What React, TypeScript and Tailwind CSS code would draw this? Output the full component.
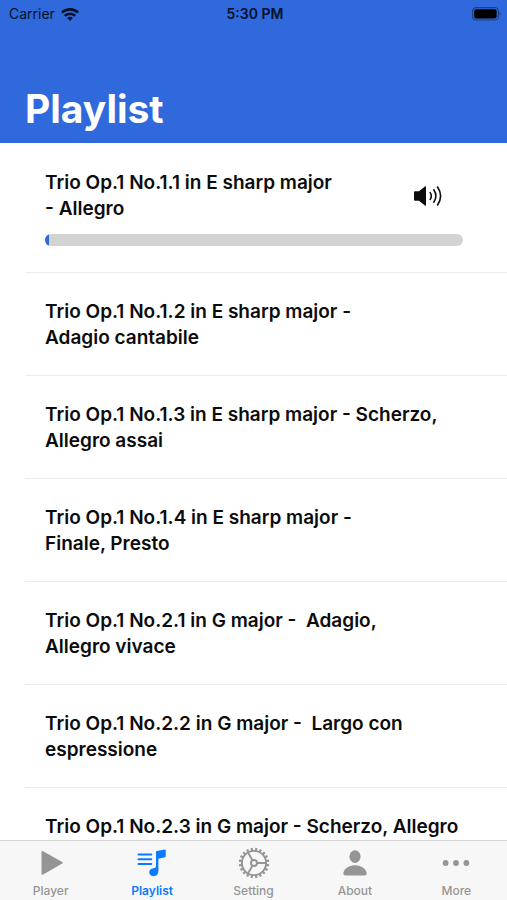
import type { ReactNode } from "react";

type Track = {
  id: string;
  lines: string[];
};

const tracks: Track[] = [
  { id: "1.1", lines: ["Trio Op.1 No.1.1 in E sharp major", "- Allegro"] },
  { id: "1.2", lines: ["Trio Op.1 No.1.2 in E sharp major -", "Adagio cantabile"] },
  { id: "1.3", lines: ["Trio Op.1 No.1.3 in E sharp major - Scherzo,", "Allegro assai"] },
  { id: "1.4", lines: ["Trio Op.1 No.1.4 in E sharp major -", "Finale, Presto"] },
  { id: "2.1", lines: ["Trio Op.1 No.2.1 in G major -  Adagio,", "Allegro vivace"] },
  { id: "2.2", lines: ["Trio Op.1 No.2.2 in G major -  Largo con", "espressione"] },
  { id: "2.3", lines: ["Trio Op.1 No.2.3 in G major - Scherzo, Allegro"] },
];

const playing = { id: "1.1", progress: 1 };

function WifiIcon() {
  return (
    <svg viewBox="0 0 18 13" className="h-[13px] w-[18px]" fill="none" stroke="currentColor" strokeWidth="2.6" aria-hidden="true">
      <path d="M.9 4.7a11.5 11.5 0 0 1 16.2 0" />
      <path d="M3.8 7.9a7.4 7.4 0 0 1 10.4 0" />
      <path d="M9 13 6.2 10.1a4 4 0 0 1 5.6 0Z" fill="currentColor" stroke="none" />
    </svg>
  );
}

function BatteryIcon() {
  return (
    <svg viewBox="0 0 30 14" className="h-[14px] w-[30px]" aria-hidden="true">
      <rect x="1.6" y=".6" width="25.8" height="12.4" rx="3.6" fill="none" stroke="currentColor" strokeOpacity=".4" strokeWidth="1.2" />
      <rect x="3.2" y="2.2" width="22.4" height="9.2" rx="1.8" fill="currentColor" />
      <path d="M28.6 5c1.4.6 1.4 3 0 3.600Z" fill="currentColor" fillOpacity=".45" />
    </svg>
  );
}

function SpeakerIcon() {
  return (
    <svg viewBox="0 0 30 22" className="h-[22px] w-[30px]" aria-label="Now playing" role="img">
      <path d="M2 6.2h4L12 1.600q1-.7 1 .4v18q0 1.100-1 .4L6 15.800H2q-1 0-1-1V7.200q0-1 1-1Z" fill="currentColor" />
      <g fill="none" stroke="currentColor" strokeWidth="1.600" strokeLinecap="round">
        <path d="M17.200 7.600q2.300 3.400 0 6.800" />
        <path d="M20.800 4.800q4.200 6.200 0 12.400" />
        <path d="M24.600 2q6 9 0 18" />
      </g>
    </svg>
  );
}

function PlayIcon() {
  return (
    <svg viewBox="0 0 32 32" className="size-8" fill="currentColor" aria-hidden="true">
      <path d="M6.500 5.300q0-1.800 1.600-1L27.300 14.900q1.400.8 0 1.700L8.100 27.500q-1.600.800-1.600-1Z" />
    </svg>
  );
}

function PlaylistIcon() {
  return (
    <svg viewBox="0 0 32 32" className="size-8" fill="currentColor" aria-hidden="true">
      <path
        d="M2.500 7.500h12.800M2.500 12.300h12.800M2.500 17.100h12.800"
        fill="none"
        stroke="currentColor"
        strokeWidth="2"
        strokeLinecap="round"
      />
      <path d="M20 5q0-.8.8-1L28.800 2.400q.9-.1.900.7v6.300q0 .7-.8.9l-6.500 1.400V24c0 2.900-1.900 5.200-4.900 5.200-2.600 0-4.300-1.600-4.300-3.900 0-2.400 1.800-3.600 4.200-4.100 1.900-.4 2.600-.8 2.600-2.200Z" />
    </svg>
  );
}

const teeth = Array.from({ length: 20 }, (_, i) => i * 18);

function SettingIcon() {
  return (
    <svg viewBox="0 0 32 32" className="size-8" fill="none" stroke="currentColor" strokeWidth="1.900" aria-hidden="true">
      <circle cx="16" cy="16" r="12.100" />
      {teeth.map((angle) => (
        <path key={angle} d="M16 4V.8" strokeWidth="2.200" transform={`rotate(${angle + 9} 16 16)`} />
      ))}
      <circle cx="16" cy="16" r="3" />
      <path d="M19 16h9M14.500 13.400 10 5.500M14.500 18.600 10 26.500" />
    </svg>
  );
}

function AboutIcon() {
  return (
    <svg viewBox="0 0 32 32" className="size-8" fill="currentColor" aria-hidden="true">
      <ellipse cx="16" cy="9.600" rx="5.600" ry="6.300" />
      <path d="M16 18.200c7 0 11.700 4.500 11.700 8.400 0 1.300-.8 2-2.400 2H6.700c-1.600 0-2.400-.7-2.400-2 0-3.900 4.700-8.400 11.700-8.400Z" />
    </svg>
  );
}

function MoreIcon() {
  return (
    <svg viewBox="0 0 32 32" className="size-8" fill="currentColor" aria-hidden="true">
      <circle cx="5.600" cy="16" r="2.900" />
      <circle cx="16" cy="16" r="2.900" />
      <circle cx="26.400" cy="16" r="2.900" />
    </svg>
  );
}

const tabs: { label: string; icon: ReactNode }[] = [
  { label: "Player", icon: <PlayIcon /> },
  { label: "Playlist", icon: <PlaylistIcon /> },
  { label: "Setting", icon: <SettingIcon /> },
  { label: "About", icon: <AboutIcon /> },
  { label: "More", icon: <MoreIcon /> },
];

function TrackRow({ track }: { track: Track }) {
  const isPlaying = track.id === playing.id;

  return (
    <li className="ml-[25px] border-b border-[#ebebeb] pt-[26px] pr-11 pb-6 pl-5">
      <button type="button" className="flex w-full items-center justify-between text-left">
        <span className="text-[19px] leading-[26px] font-semibold whitespace-pre">
          {track.lines.map((line) => (
            <span key={line} className="block">
              {line}
            </span>
          ))}
        </span>
        {isPlaying ? (
          <span className="mr-5">
            <SpeakerIcon />
          </span>
        ) : null}
      </button>
      {isPlaying ? (
        <div
          role="progressbar"
          aria-label="Playback position"
          aria-valuenow={playing.progress}
          className="mt-3 mb-0.5 h-3 overflow-hidden rounded-full bg-[#d3d3d3]"
        >
          <div className="h-full bg-[#2f69dc]" style={{ width: `${playing.progress}%` }} />
        </div>
      ) : null}
    </li>
  );
}

export default function App() {
  return (
    <div className="flex h-dvh flex-col bg-white font-[Inter,'Liberation_Sans',sans-serif] text-[#0c0c0c]">
      <header className="bg-[#2f69dc]">
        <div className="grid h-7 grid-cols-3 items-center pr-1.5 pl-[9px] text-sm text-[#051129]">
          <div className="flex items-center gap-1.5">
            <span>Carrier</span>
            <WifiIcon />
          </div>
          <div className="text-center font-semibold">5:30 PM</div>
          <div className="flex justify-end text-black">
            <BatteryIcon />
          </div>
        </div>
        <h1 className="px-[25px] pt-[57px] pb-2.5 text-[39px] leading-[48px] font-bold text-white">Playlist</h1>
      </header>

      <main className="min-h-0 flex-1 overflow-y-auto pt-px [scrollbar-width:none]">
        <ul>
          {tracks.map((track) => (
            <TrackRow key={track.id} track={track} />
          ))}
        </ul>
      </main>

      <nav className="flex border-t border-[#d5d5d5] bg-[#f7f7f7]">
        {tabs.map((tab) => {
          const active = tab.label === "Playlist";
          return (
            <a
              key={tab.label}
              href={`#${tab.label.toLowerCase()}`}
              aria-current={active ? "page" : undefined}
              className={`flex flex-1 flex-col items-center pt-1.5 pb-px ${active ? "text-[#0a7aff]" : "text-[#959595]"}`}
            >
              {tab.icon}
              <span className={`mt-1 text-xs leading-4 ${active ? "font-semibold" : "font-medium"}`}>{tab.label}</span>
            </a>
          );
        })}
      </nav>
    </div>
  );
}
